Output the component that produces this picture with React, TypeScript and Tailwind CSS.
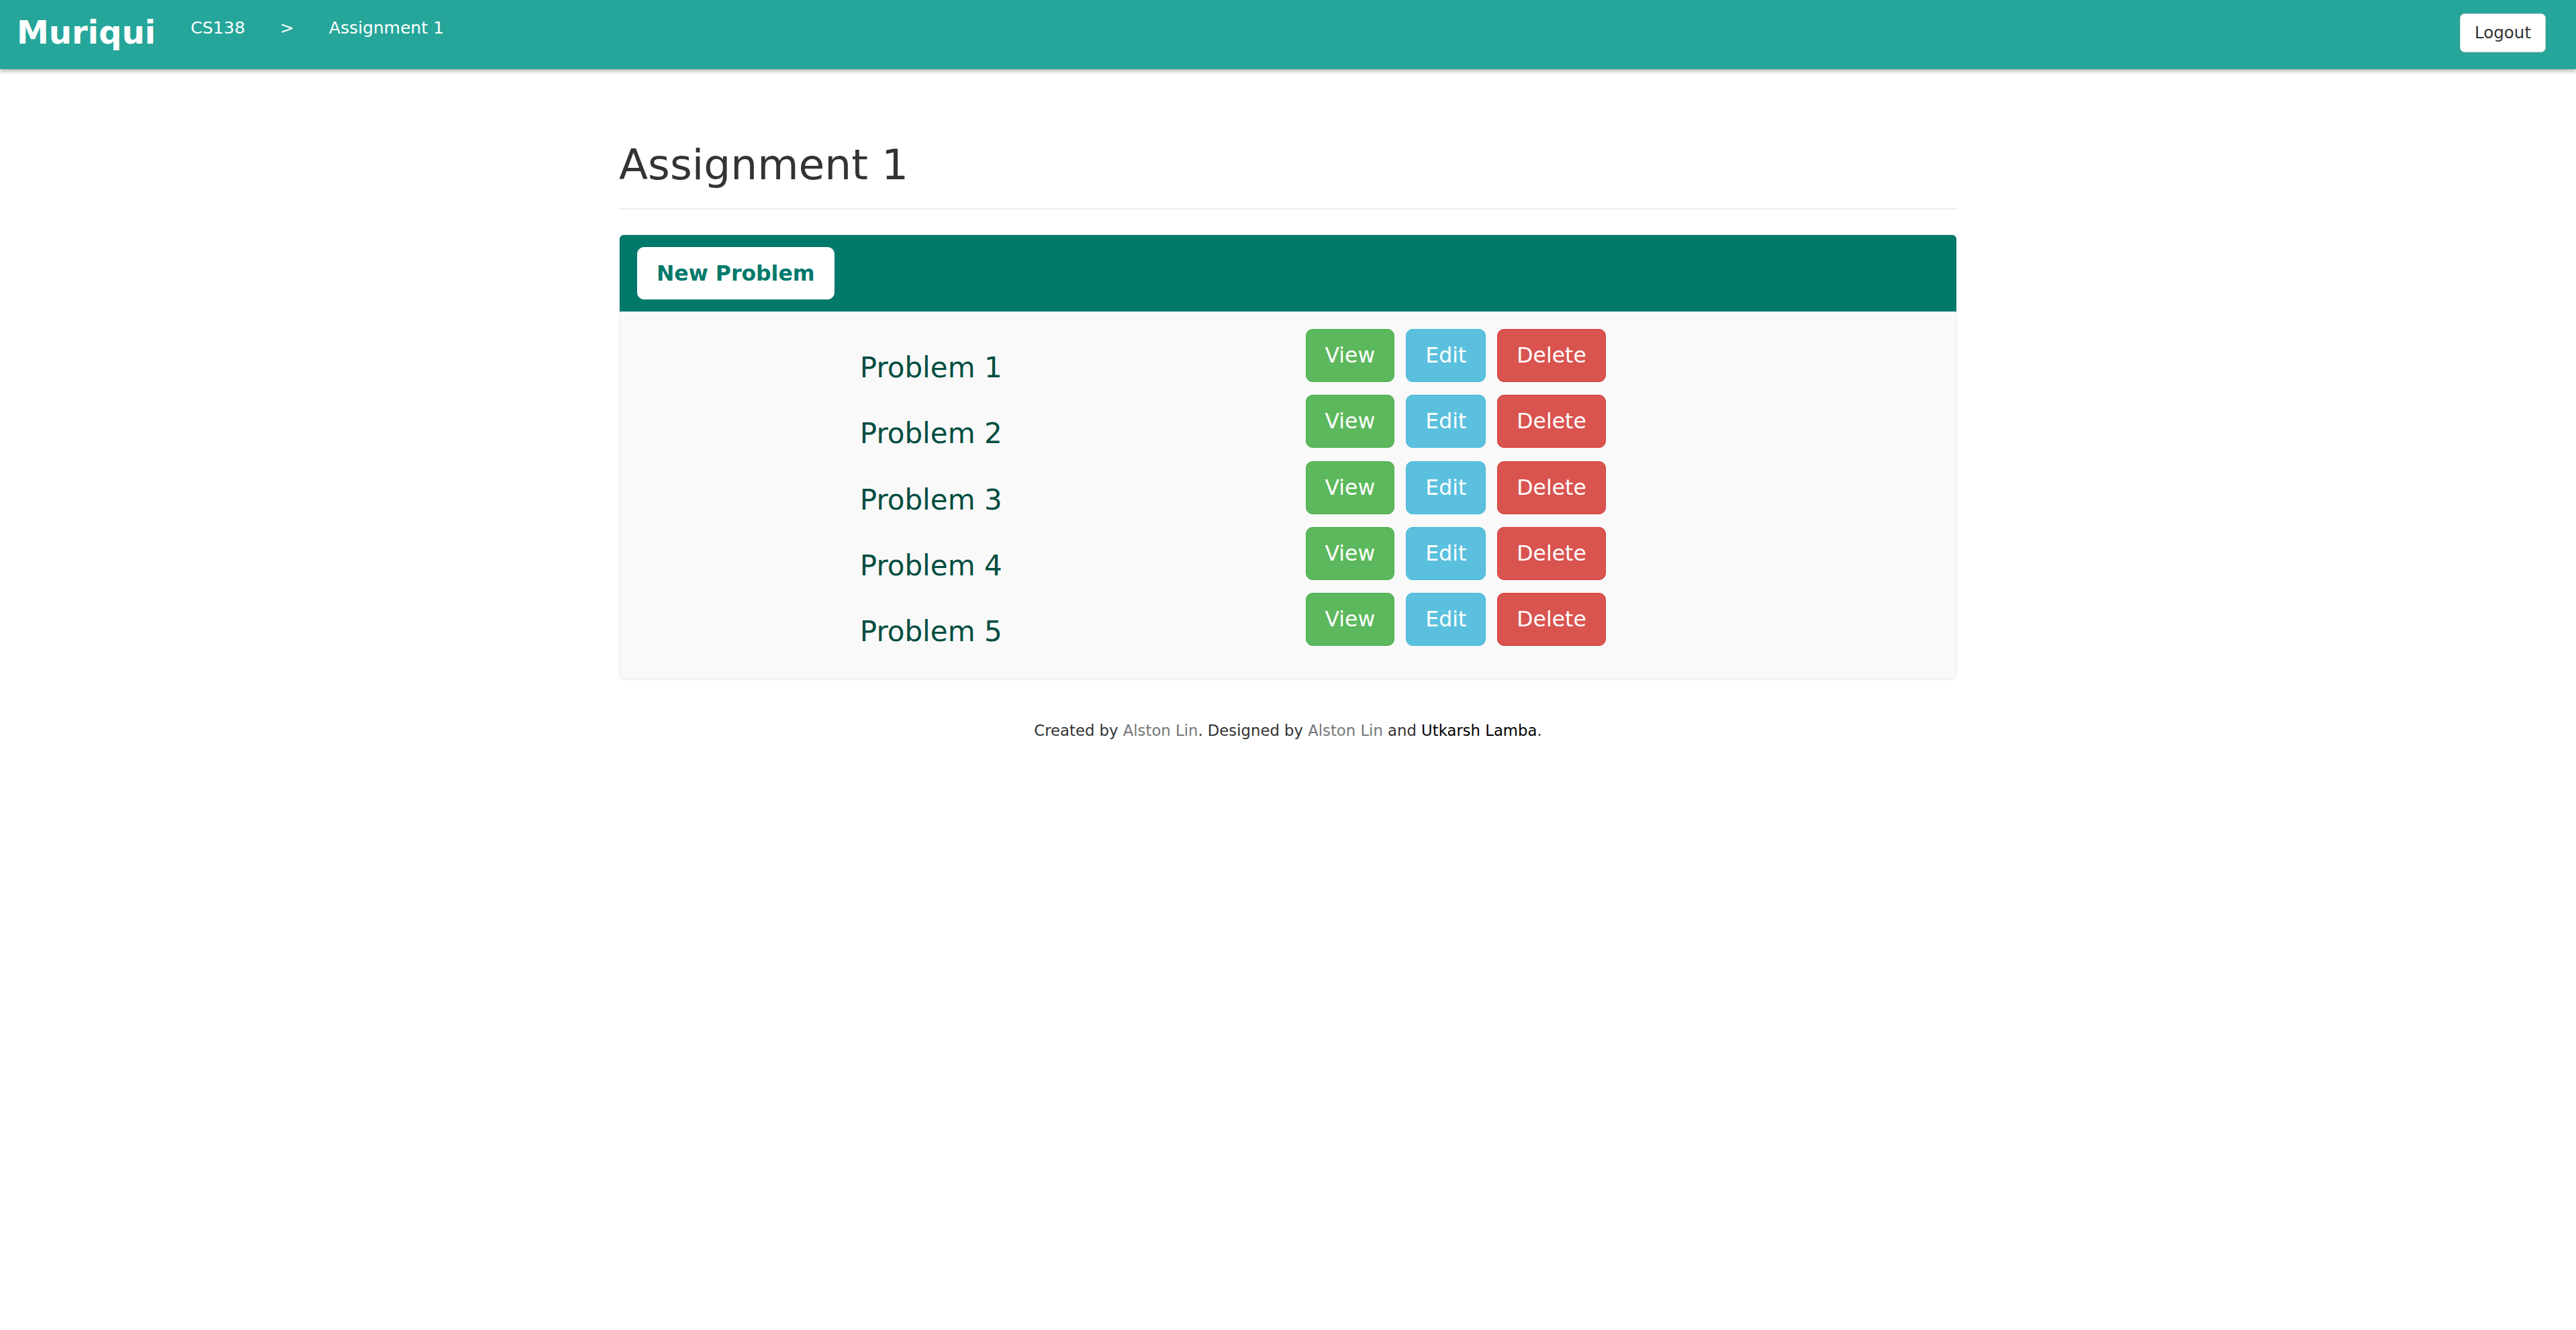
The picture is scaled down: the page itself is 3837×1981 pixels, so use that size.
const problems = ['Problem 1', 'Problem 2', 'Problem 3', 'Problem 4', 'Problem 5'];

const font = "font-['DejaVu_Sans',Verdana,sans-serif]";

function ProblemRow({ name }: { name: string }) {
  return (
    <div className="grid grid-cols-12">
      <div className="col-start-3 col-span-4 px-[26px]">
        <h3 className="mt-[35px] mb-[17px] text-[42px] leading-[1.1] text-[#004d40]">{name}</h3>
      </div>
      <div className="col-span-6 px-[26px] flex items-start gap-[17px]">
        <button className="h-[79px] px-[28px] text-[31.5px] text-white bg-[#5cb85c] border border-[#4cae4c] rounded-[10px]">View</button>
        <button className="h-[79px] px-[28px] text-[31.5px] text-white bg-[#5bc0de] border border-[#46b8da] rounded-[10px]">Edit</button>
        <button className="h-[79px] px-[28px] text-[31.5px] text-white bg-[#d9534f] border border-[#d43f3a] rounded-[10px]">Delete</button>
      </div>
    </div>
  );
}

export default function App() {
  return (
    <div className={`min-h-screen bg-white text-[#333] ${font}`}>
      {/* ── Navbar ───────────────────────────── */}
      <nav className="h-[103px] bg-[#26a69a] flex items-start justify-between shadow-[0_3px_6px_rgba(0,0,0,0.3)] relative">
        <div className="flex items-start">
          <a className="pl-[25px] pr-[26px] pt-[21px] text-[48px] font-bold leading-[1.164] text-white">Muriqui</a>
          <a className="px-[26px] pt-[27px] text-[25px] leading-[1.164] text-white">CS138</a>
          <span className="px-[26px] pt-[27px] text-[25px] leading-[1.164] text-white">&gt;</span>
          <a className="px-[26px] pt-[27px] text-[25px] leading-[1.164] text-white">Assignment 1</a>
        </div>
        <button className="mt-[20px] mr-[45px] h-[58px] px-[21px] text-[24.5px] text-[#333] bg-white border border-[#ccc] rounded-[7px]">
          Logout
        </button>
      </nav>

      {/* ── Content ──────────────────────────── */}
      <main className="w-[1993px] mx-auto">
        <div className="pt-[108px] pb-[30px] border-b-2 border-[#eee]">
          <h1 className="text-[63px] leading-[1.1] text-[#333]">Assignment 1</h1>
        </div>

        <div className="mt-[37px] rounded-[7px] border border-[#eee] shadow-[0_1px_2px_rgba(0,0,0,0.05)] overflow-hidden">
          <div className="bg-[#00796b] px-[26px] py-[18px]">
            <button className="h-[78px] px-[28px] text-[31.5px] font-bold text-[#00796b] bg-white border border-white rounded-[10px]">
              New Problem
            </button>
          </div>
          <div className="bg-[#f9f9f9] pt-[26px] pb-[30px]">
            {problems.map((p) => (
              <ProblemRow key={p} name={p} />
            ))}
          </div>
        </div>

        <footer className="mt-[59px] text-center text-[22.75px] text-[#333]">
          Created by <a className="text-[#777]">Alston Lin</a>. Designed by <a className="text-[#777]">Alston Lin</a> and <a className="text-black">Utkarsh Lamba</a>.
        </footer>
      </main>
    </div>
  );
}
